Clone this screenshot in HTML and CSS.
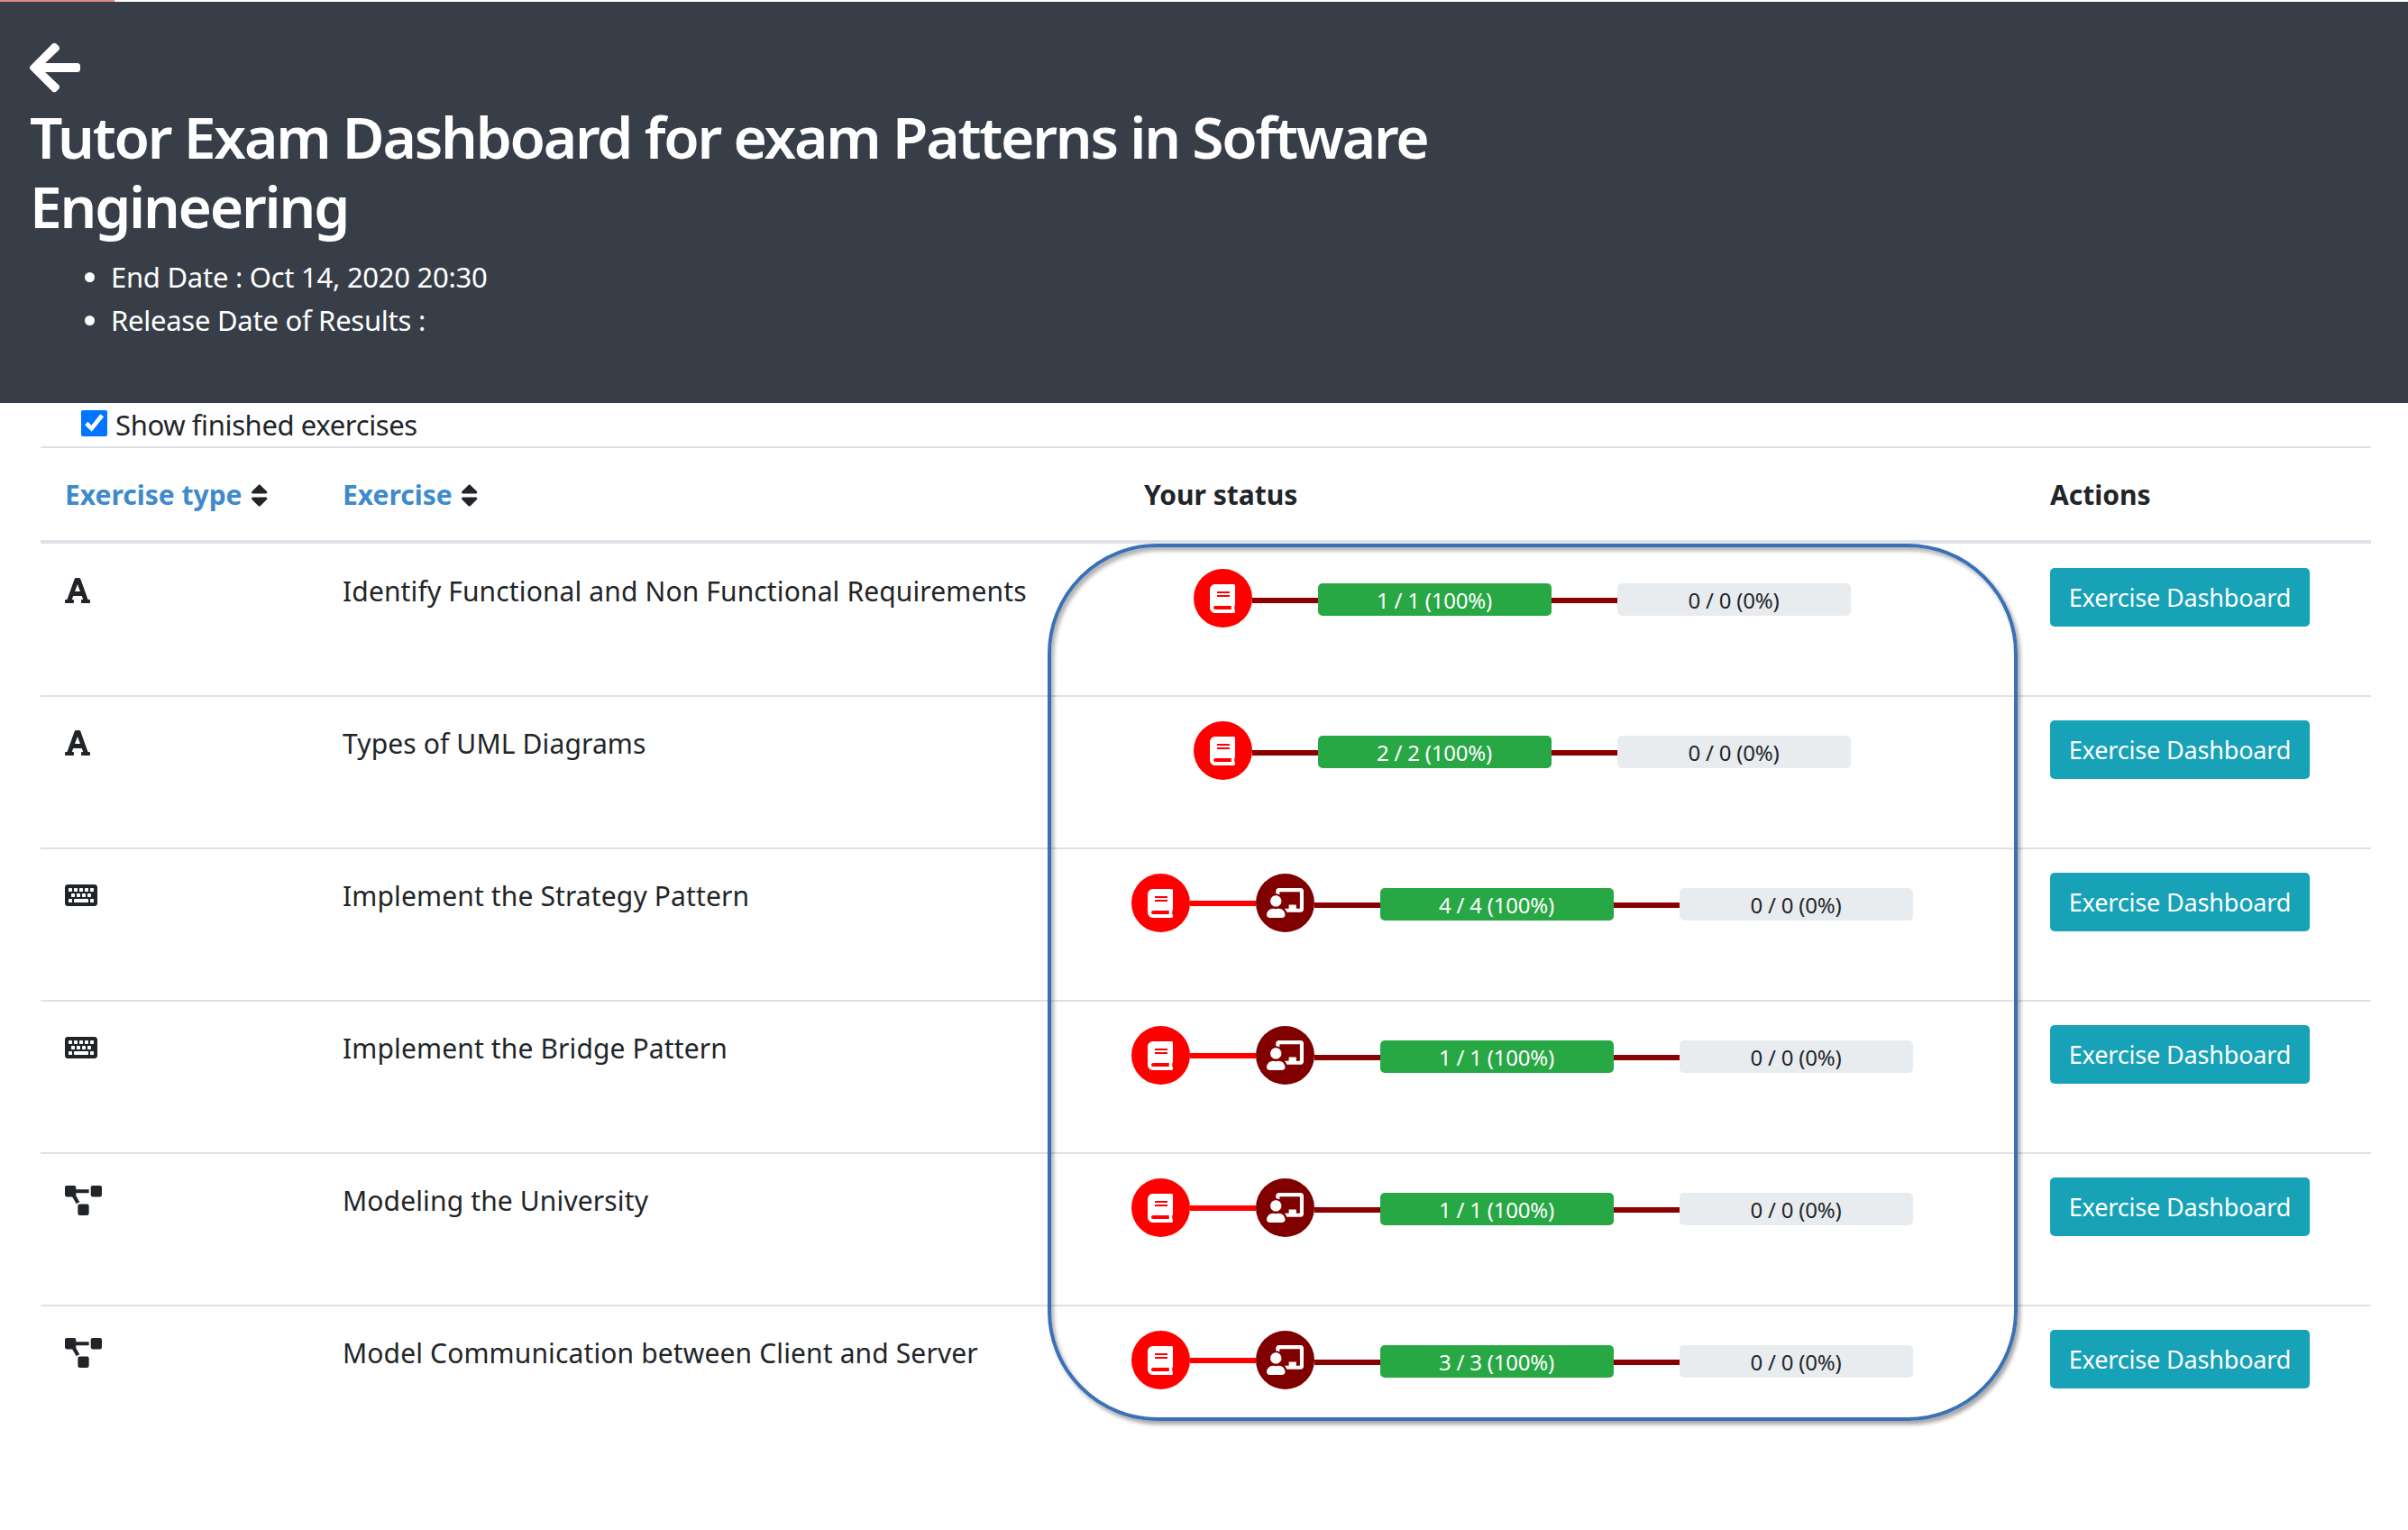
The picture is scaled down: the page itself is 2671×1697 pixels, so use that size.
FILE: index.html
```html
<!DOCTYPE html>
<html lang="en">
<head>
<meta charset="utf-8">
<title>Tutor Exam Dashboard</title>
<link rel="stylesheet" href="styles.css">
</head>
<body>
<svg class="defs" width="0" height="0" aria-hidden="true">
  <symbol id="i-font" viewBox="0 0 448 512"><path d="M432 416h-23.41L277.88 53.69A32 32 0 0 0 247.58 32h-47.16a32 32 0 0 0-30.3 21.69L39.41 416H16a16 16 0 0 0-16 16v32a16 16 0 0 0 16 16h128a16 16 0 0 0 16-16v-32a16 16 0 0 0-16-16h-19.6l23.3-64h152.6l23.3 64H304a16 16 0 0 0-16 16v32a16 16 0 0 0 16 16h128a16 16 0 0 0 16-16v-32a16 16 0 0 0-16-16zM176.85 272L224 142.51 271.15 272z"/></symbol>
  <symbol id="i-keyboard" viewBox="0 0 576 512"><path fill-rule="evenodd" d="M528 448H48c-26.51 0-48-21.49-48-48V112c0-26.51 21.49-48 48-48h480c26.51 0 48 21.49 48 48v288c0 26.51-21.49 48-48 48zM76 128h40a12 12 0 0 1 12 12v40a12 12 0 0 1-12 12H76a12 12 0 0 1-12-12v-40a12 12 0 0 1 12-12zm96 0h40a12 12 0 0 1 12 12v40a12 12 0 0 1-12 12h-40a12 12 0 0 1-12-12v-40a12 12 0 0 1 12-12zm96 0h40a12 12 0 0 1 12 12v40a12 12 0 0 1-12 12h-40a12 12 0 0 1-12-12v-40a12 12 0 0 1 12-12zm96 0h40a12 12 0 0 1 12 12v40a12 12 0 0 1-12 12h-40a12 12 0 0 1-12-12v-40a12 12 0 0 1 12-12zm96 0h40a12 12 0 0 1 12 12v40a12 12 0 0 1-12 12h-40a12 12 0 0 1-12-12v-40a12 12 0 0 1 12-12zM124 224h40a12 12 0 0 1 12 12v40a12 12 0 0 1-12 12h-40a12 12 0 0 1-12-12v-40a12 12 0 0 1 12-12zm96 0h40a12 12 0 0 1 12 12v40a12 12 0 0 1-12 12h-40a12 12 0 0 1-12-12v-40a12 12 0 0 1 12-12zm96 0h40a12 12 0 0 1 12 12v40a12 12 0 0 1-12 12h-40a12 12 0 0 1-12-12v-40a12 12 0 0 1 12-12zm96 0h40a12 12 0 0 1 12 12v40a12 12 0 0 1-12 12h-40a12 12 0 0 1-12-12v-40a12 12 0 0 1 12-12zM76 320h40a12 12 0 0 1 12 12v40a12 12 0 0 1-12 12H76a12 12 0 0 1-12-12v-40a12 12 0 0 1 12-12zm96 0h232a12 12 0 0 1 12 12v40a12 12 0 0 1-12 12H172a12 12 0 0 1-12-12v-40a12 12 0 0 1 12-12zm288 0h40a12 12 0 0 1 12 12v40a12 12 0 0 1-12 12h-40a12 12 0 0 1-12-12v-40a12 12 0 0 1 12-12z"/></symbol>
  <symbol id="i-diagram" viewBox="0 0 640 512"><path d="M384 320H256c-17.67 0-32 14.33-32 32v128c0 17.67 14.33 32 32 32h128c17.67 0 32-14.33 32-32V352c0-17.67-14.33-32-32-32zM192 32c0-17.67-14.33-32-32-32H32C14.33 0 0 14.33 0 32v128c0 17.67 14.33 32 32 32h95.72l73.16 128.04C211.98 300.98 232.4 288 256 288h.28L192 175.51V128h224V64H192V32zM608 0H480c-17.67 0-32 14.33-32 32v128c0 17.67 14.33 32 32 32h128c17.67 0 32-14.33 32-32V32c0-17.67-14.33-32-32-32z"/></symbol>
  <symbol id="i-book" viewBox="0 0 448 512"><path d="M448 360V24c0-13.3-10.7-24-24-24H96C43 0 0 43 0 96v320c0 53 43 96 96 96h328c13.3 0 24-10.7 24-24v-16c0-7.5-3.5-14.3-8.9-18.7-4.2-15.4-4.2-59.3 0-74.7 5.4-4.3 8.9-11.1 8.9-18.6zM128 134c0-3.3 2.7-6 6-6h212c3.3 0 6 2.7 6 6v20c0 3.3-2.7 6-6 6H134c-3.3 0-6-2.7-6-6v-20zm0 64c0-3.3 2.7-6 6-6h212c3.3 0 6 2.7 6 6v20c0 3.3-2.7 6-6 6H134c-3.3 0-6-2.7-6-6v-20zm253.4 250H96c-17.7 0-32-14.3-32-32 0-17.6 14.4-32 32-32h285.4c-1.9 17.1-1.9 46.9 0 64z"/></symbol>
  <symbol id="i-teacher" viewBox="0 0 640 512"><path d="M208 352c-2.39 0-4.78.35-7.06 1.09C187.98 357.3 174.35 360 160 360c-14.35 0-27.98-2.7-40.95-6.91-2.28-.74-4.66-1.09-7.05-1.09C49.94 352-.33 402.48 0 464.62.14 490.88 21.73 512 48 512h224c26.27 0 47.86-21.12 48-47.38.33-62.14-49.94-112.62-112-112.62zm-48-32c53.02 0 96-42.98 96-96s-42.98-96-96-96-96 42.98-96 96 42.98 96 96 96zM592 0H208c-26.47 0-48 22.25-48 49.59V96c23.42 0 45.1 6.78 64 17.8V64h352v288h-64v-64H384v64h-76.24c19.1 16.69 33.12 38.73 39.69 64H592c26.47 0 48-22.25 48-49.59V49.59C640 22.25 618.47 0 592 0z"/></symbol>
  <symbol id="i-sort" viewBox="0 0 320 512"><path d="M41 288h238c21.4 0 32.1 25.9 17 41L177 448c-9.4 9.4-24.6 9.4-33.9 0L24 329c-15.1-15.1-4.4-41 17-41zm255-105L177 64c-9.4-9.4-24.6-9.4-33.9 0L24 183c-15.1 15.1-4.4 41 17 41h238c21.4 0 32.1-25.9 17-41z"/></symbol>
</svg>

<div class="top-strip"></div>
<header class="page-header">
  <svg class="back" viewBox="0 0 448 512"><path d="M257.5 445.1l-22.2 22.2c-9.4 9.4-24.6 9.4-33.9 0L7 273c-9.4-9.4-9.4-24.6 0-33.9L201.4 44.7c9.4-9.4 24.6-9.4 33.9 0l22.2 22.2c9.5 9.5 9.3 25-.4 34.3L136.6 216H424c13.3 0 24 10.7 24 24v32c0 13.3-10.7 24-24 24H136.6l120.5 114.8c9.8 9.3 10 24.8.4 34.3z"/></svg>
  <h1 class="title">Tutor Exam Dashboard for exam Patterns in Software Engineering</h1>
  <ul class="dates">
    <li>End Date : Oct 14, 2020 20:30</li>
    <li>Release Date of Results :</li>
  </ul>
</header>

<label class="finished"><input type="checkbox" checked><span>Show finished exercises</span></label>

<main class="board">
  <div class="row head">
    <div class="cell"><a class="sort-link">Exercise type <svg class="sort"><use href="#i-sort"/></svg></a></div>
    <div class="cell"><a class="sort-link">Exercise <svg class="sort"><use href="#i-sort"/></svg></a></div>
    <div class="cell">Your status</div>
    <div class="cell">Actions</div>
  </div>

  <div class="row">
    <div class="cell"><svg class="type type-font"><use href="#i-font"/></svg></div>
    <div class="cell name">Identify Functional and Non Functional Requirements</div>
    <div class="cell status">
      <span class="step red"><svg class="i-book"><use href="#i-book"/></svg></span>
      <span class="link dark"></span>
      <span class="bar done">1 / 1 (100%)</span>
      <span class="link dark"></span>
      <span class="bar empty">0 / 0 (0%)</span>
    </div>
    <div class="cell"><a class="btn">Exercise Dashboard</a></div>
  </div>

  <div class="row">
    <div class="cell"><svg class="type type-font"><use href="#i-font"/></svg></div>
    <div class="cell name">Types of UML Diagrams</div>
    <div class="cell status">
      <span class="step red"><svg class="i-book"><use href="#i-book"/></svg></span>
      <span class="link dark"></span>
      <span class="bar done">2 / 2 (100%)</span>
      <span class="link dark"></span>
      <span class="bar empty">0 / 0 (0%)</span>
    </div>
    <div class="cell"><a class="btn">Exercise Dashboard</a></div>
  </div>

  <div class="row">
    <div class="cell"><svg class="type type-kb"><use href="#i-keyboard"/></svg></div>
    <div class="cell name">Implement the Strategy Pattern</div>
    <div class="cell status">
      <span class="step red"><svg class="i-book"><use href="#i-book"/></svg></span>
      <span class="link bright"></span>
      <span class="step maroon"><svg class="i-teacher"><use href="#i-teacher"/></svg></span>
      <span class="link dark"></span>
      <span class="bar done">4 / 4 (100%)</span>
      <span class="link dark"></span>
      <span class="bar empty">0 / 0 (0%)</span>
    </div>
    <div class="cell"><a class="btn">Exercise Dashboard</a></div>
  </div>

  <div class="row">
    <div class="cell"><svg class="type type-kb"><use href="#i-keyboard"/></svg></div>
    <div class="cell name">Implement the Bridge Pattern</div>
    <div class="cell status">
      <span class="step red"><svg class="i-book"><use href="#i-book"/></svg></span>
      <span class="link bright"></span>
      <span class="step maroon"><svg class="i-teacher"><use href="#i-teacher"/></svg></span>
      <span class="link dark"></span>
      <span class="bar done">1 / 1 (100%)</span>
      <span class="link dark"></span>
      <span class="bar empty">0 / 0 (0%)</span>
    </div>
    <div class="cell"><a class="btn">Exercise Dashboard</a></div>
  </div>

  <div class="row">
    <div class="cell"><svg class="type type-uml"><use href="#i-diagram"/></svg></div>
    <div class="cell name">Modeling the University</div>
    <div class="cell status">
      <span class="step red"><svg class="i-book"><use href="#i-book"/></svg></span>
      <span class="link bright"></span>
      <span class="step maroon"><svg class="i-teacher"><use href="#i-teacher"/></svg></span>
      <span class="link dark"></span>
      <span class="bar done">1 / 1 (100%)</span>
      <span class="link dark"></span>
      <span class="bar empty">0 / 0 (0%)</span>
    </div>
    <div class="cell"><a class="btn">Exercise Dashboard</a></div>
  </div>

  <div class="row">
    <div class="cell"><svg class="type type-uml"><use href="#i-diagram"/></svg></div>
    <div class="cell name">Model Communication between Client and Server</div>
    <div class="cell status">
      <span class="step red"><svg class="i-book"><use href="#i-book"/></svg></span>
      <span class="link bright"></span>
      <span class="step maroon"><svg class="i-teacher"><use href="#i-teacher"/></svg></span>
      <span class="link dark"></span>
      <span class="bar done">3 / 3 (100%)</span>
      <span class="link dark"></span>
      <span class="bar empty">0 / 0 (0%)</span>
    </div>
    <div class="cell"><a class="btn">Exercise Dashboard</a></div>
  </div>

  <div class="highlight"></div>
</main>
</body>
</html>
```

FILE: styles.css
```css
* { box-sizing: border-box; }
html, body { margin: 0; background: #fff; }
body {
  height: 1697px;
  overflow: hidden;
  font-family: "Noto Sans", "Open Sans", sans-serif;
  font-size: 27px;
  line-height: 1.5;
  color: #212529;
}
.defs { position: absolute; }

.top-strip { width: 127px; height: 2px; background: #dd8a8e; }

.page-header {
  height: 445px;
  background: #373e48;
  color: #fff;
  padding: 41px 33px 0;
}
.back { display: block; width: 56px; height: 64px; fill: #fff; }
.title {
  margin: 6px 0 0;
  width: 1640px;
  font-size: 64px;
  font-weight: 600;
  line-height: 77px;
  letter-spacing: -2.2px;
}
.dates {
  margin: 16px 0 0;
  padding: 0 0 0 90px;
  font-size: 31px;
  line-height: 48px;
  letter-spacing: -.26px;
}

.finished {
  display: flex;
  align-items: flex-start;
  gap: 9px;
  height: 48px;
  padding-left: 90px;
  font-size: 31px;
  line-height: 48px;
  letter-spacing: -.38px;
}
.finished input { width: 29px; height: 29px; margin: 8px 0 0; }

.board { position: relative; margin-left: 45px; width: 2585px; }
.row {
  display: grid;
  grid-template-columns: 308px 889px 1005px 383px;
  height: 169px;
  border-top: 2px solid #dee2e6;
  font-size: 30px;
}
.row.head { height: 108px; font-weight: 700; border-bottom: 4px solid #dee2e6; }
.row.head .cell { padding-top: 29px; }
.row.head + .row { height: 168px; border-top: 0; }
.row.head + .row .cell { margin-top: 1px; }
.cell { padding: 26px 0 0 27px; white-space: nowrap; }
.name { padding-top: 29px; letter-spacing: .13px; }

.sort-link { color: #3e8acc; }
.sort { width: 19.4px; height: 31px; fill: #212529; vertical-align: -5px; margin-left: 2px; }

.type { display: block; fill: #212529; }
.type-font { width: 28px; height: 32px; margin-top: 9px; }
.type-kb { width: 36px; height: 32px; margin-top: 9px; }
.type-uml { width: 41px; height: 33px; margin-top: 9px; }

.status {
  display: flex;
  align-items: flex-start;
  justify-content: center;
  width: 892px;
  padding: 27px 0 0;
}
.step {
  flex: none;
  width: 65px;
  height: 65px;
  border-radius: 50%;
  display: flex;
  align-items: center;
  justify-content: center;
  fill: #fff;
}
.step.red { background: #f00; }
.step.maroon { background: #800000; }
.i-book { width: 28px; height: 32px; }
.i-teacher { width: 41px; height: 33px; }

.link { flex: none; width: 73px; height: 6px; margin-top: 32px; }
.link.dark { background: #8b0000; }
.link.bright { background: #f00; margin-top: 30px; }

.bar {
  flex: none;
  width: 259px;
  height: 36px;
  margin-top: 16px;
  border-radius: 5px;
  text-align: center;
  font-size: 24px;
  letter-spacing: -.2px;
  line-height: 38px;
}
.bar.done { background: #28a745; color: #fff; }
.bar.empty { background: #e9ecef; }

.btn {
  display: block;
  width: 288px;
  height: 65px;
  border-radius: 5px;
  background: #17a2b8;
  color: #fff;
  font-size: 27px;
  letter-spacing: -.17px;
  line-height: 66px;
  text-align: center;
}

.highlight {
  position: absolute;
  left: 1117px;
  top: 108px;
  width: 1076px;
  height: 973px;
  border: 4px solid #3a70b5;
  border-radius: 122px;
  box-shadow: 3px 4px 4px rgba(0,0,0,.35), inset 3px 4px 4px rgba(0,0,0,.3);
  pointer-events: none;
}
```
